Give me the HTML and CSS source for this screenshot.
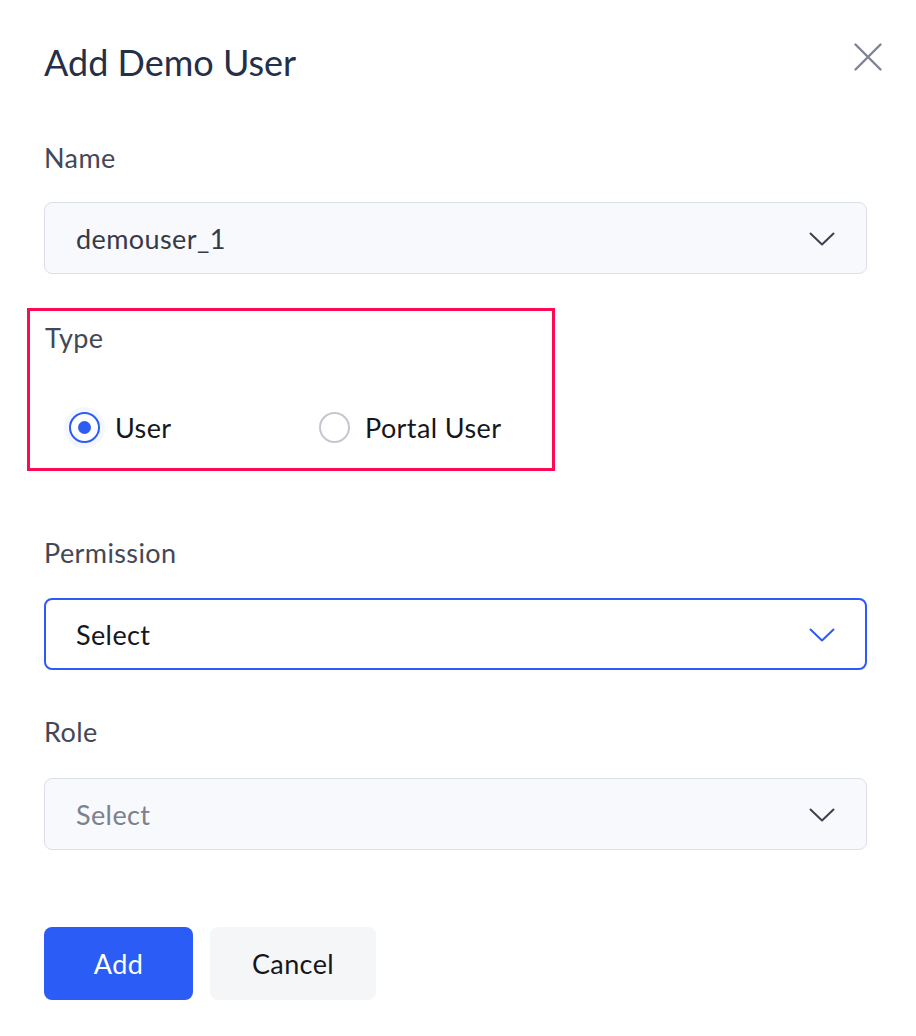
FILE: index.html
```html
<!DOCTYPE html>
<html lang="en">
<head>
<meta charset="utf-8">
<title>Add Demo User</title>
<link rel="stylesheet" href="styles.css">
</head>
<body>
<div class="dialog">
  <div class="header">
    <h1 class="title">Add Demo User</h1>
    <button class="close" aria-label="Close">
      <svg width="28" height="28" viewBox="0 0 28 28"><path d="M1.5 1.5L26.5 26.5M26.5 1.5L1.5 26.5" stroke="#7e8494" stroke-width="2.4" fill="none" stroke-linecap="round"/></svg>
    </button>
  </div>

  <div class="field field-name">
    <div class="label">Name</div>
    <div class="select filled">
      <span class="value">demouser_1</span>
      <svg class="chev" width="26" height="14" viewBox="0 0 26 14"><path d="M1.5 1.5L13 12.5L24.5 1.5" stroke="#3b404c" stroke-width="2" fill="none" stroke-linecap="round" stroke-linejoin="round"/></svg>
    </div>
  </div>

  <div class="type-group">
    <div class="label">Type</div>
    <div class="radios">
      <label class="radio-item">
        <span class="radio checked"><span class="dot"></span></span>
        <span class="radio-label">User</span>
      </label>
      <label class="radio-item">
        <span class="radio"></span>
        <span class="radio-label">Portal User</span>
      </label>
    </div>
  </div>

  <div class="field field-perm">
    <div class="label">Permission</div>
    <div class="select focused">
      <span class="value">Select</span>
      <svg class="chev" width="26" height="14" viewBox="0 0 26 14"><path d="M1.5 1.5L13 12.5L24.5 1.5" stroke="#2c5cf6" stroke-width="2" fill="none" stroke-linecap="round" stroke-linejoin="round"/></svg>
    </div>
  </div>

  <div class="field field-role">
    <div class="label">Role</div>
    <div class="select filled">
      <span class="value placeholder">Select</span>
      <svg class="chev" width="26" height="14" viewBox="0 0 26 14"><path d="M1.5 1.5L13 12.5L24.5 1.5" stroke="#3b404c" stroke-width="2" fill="none" stroke-linecap="round" stroke-linejoin="round"/></svg>
    </div>
  </div>

  <div class="actions">
    <button class="btn btn-primary">Add</button>
    <button class="btn btn-secondary">Cancel</button>
  </div>
</div>
</body>
</html>
```

FILE: styles.css
```css
* { box-sizing: border-box; }
html, body {
  margin: 0;
  padding: 0;
  background: #ffffff;
}
body {
  font-family: Lato, "Open Sans", "Liberation Sans", sans-serif;
  color: #1c1f26;
}
.dialog {
  width: 916px;
  padding: 40px 49px 0 44px;
}
.header {
  display: flex;
  justify-content: space-between;
  align-items: flex-start;
  margin-right: -15px;
}
.title {
  margin: 0;
  font-size: 36px;
  line-height: 44px;
  font-weight: 400;
  color: #243049;
}
.close {
  border: 0;
  background: none;
  padding: 0;
  margin-top: 3px;
  width: 28px;
  height: 28px;
  display: flex;
}
.label {
  font-size: 27px;
  letter-spacing: 0.4px;
  line-height: 30px;
  color: #434857;
}
.field-name { margin-top: 59px; }
.field .label { margin-bottom: 29px; }
.select {
  height: 72px;
  border-radius: 8px;
  display: flex;
  align-items: center;
  justify-content: space-between;
  padding: 0 31px;
  font-size: 27px;
  letter-spacing: 0.4px;
}
.select.filled {
  background: #f8f9fc;
  border: 1px solid #dcdfe7;
}
.select.focused {
  background: #ffffff;
  border: 2px solid #2c5cf6;
  padding: 0 30px;
}
.value { color: #353a47; }
.focused .value { color: #15171c; }
.value.placeholder { color: #7c818e; }
.chev { display: block; margin-top: 2px; }

.type-group {
  margin-top: 34px;
  margin-left: -17px;
  width: 528px;
  border: 3px solid #fd0a54;
  padding: 12px 15px 26px;
}
.radios {
  display: flex;
  margin-top: 59px;
  padding-left: 24px;
}
.radio-item {
  display: flex;
  align-items: center;
  gap: 15px;
  height: 30px;
  font-size: 27px;
  letter-spacing: 0.4px;
  color: #15171c;
}
.radio-item:first-child { width: 250px; }
.radio {
  width: 31px;
  height: 31px;
  border-radius: 50%;
  border: 2px solid #c4c7d0;
  background: #fff;
  display: flex;
  align-items: center;
  justify-content: center;
  flex: none;
}
.radio.checked {
  border-color: #2c5cf6;
  box-shadow: 0 0 0 5px rgba(44, 92, 246, 0.05);
}
.dot {
  width: 13px;
  height: 13px;
  border-radius: 50%;
  background: #2c5cf6;
}
.field-perm { margin-top: 67px; }
.field-perm .label { margin-bottom: 30px; }
.field-role { margin-top: 47px; }
.field-role .label { margin-bottom: 31px; }

.actions {
  display: flex;
  gap: 17px;
  margin-top: 77px;
}
.btn {
  height: 73px;
  border: 0;
  border-radius: 8px;
  font-family: Lato, "Open Sans", "Liberation Sans", sans-serif;
  font-size: 27px;
  letter-spacing: 0.4px;
  padding: 0;
}
.btn-primary {
  width: 149px;
  background: #2b5cf6;
  color: #ffffff;
}
.btn-secondary {
  width: 166px;
  background: #f5f6f8;
  color: #15171c;
}
```
